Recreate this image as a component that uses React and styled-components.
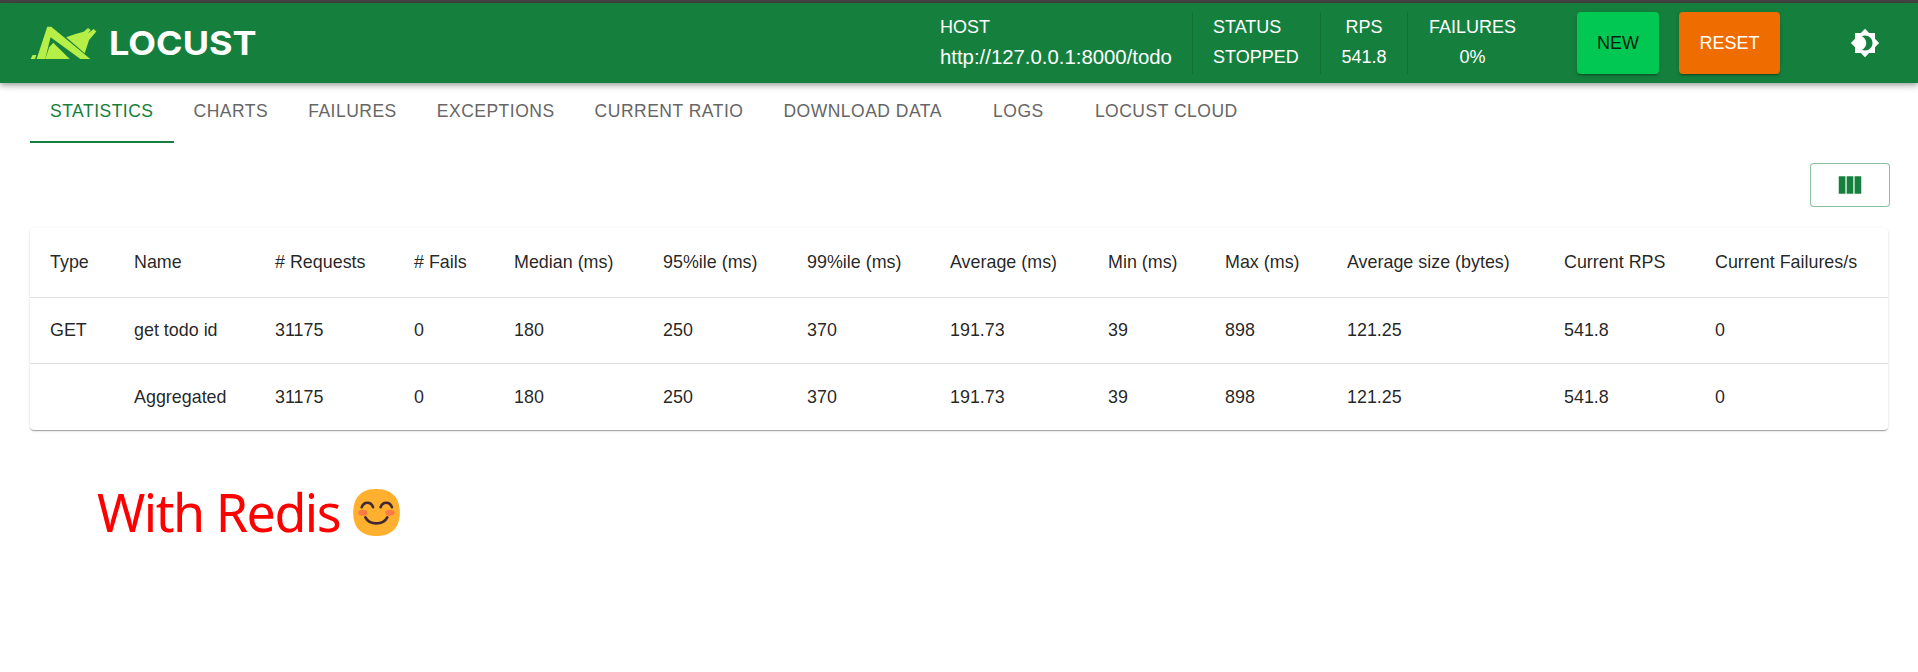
import React from "react";
import styled, { createGlobalStyle } from "styled-components";

const Global = createGlobalStyle`
  html, body { margin: 0; padding: 0; background: #fff; }
  body { font-family: "Liberation Sans", Arial, sans-serif; overflow: hidden; }
`;
const Page = styled.div`
  width: 1918px;
  height: 672px;
  border-top: 3px solid #444;
  box-sizing: border-box;
  background: #fff;
`;
const Header = styled.header`
  height: 80px;
  background: #15803d;
  box-shadow: 0 2px 4px -1px rgba(0,0,0,.2), 0 4px 5px rgba(0,0,0,.14), 0 1px 10px rgba(0,0,0,.12);
  display: flex;
  align-items: center;
  padding: 0 30px;
  color: #fff;
  position: relative;
`;
const Brand = styled.div`
  display: flex;
  align-items: center;
  gap: 12px;
  margin-right: auto;
`;
const Wordmark = styled.span`
  font-family: Inter, sans-serif;
  font-weight: 700;
  font-size: 33px;
  line-height: 1;
  transform: scaleX(1.09);
  transform-origin: left center;
`;
const Stats = styled.div`
  display: flex;
  height: 62px;
  margin-right: 40px;
`;
const Stat = styled.div`
  display: flex;
  flex-direction: column;
  justify-content: space-between;
  align-items: ${p => p.$center ? "center" : "flex-start"};
  width: ${p => p.$w}px;
  padding: 3px 0 5px ${p => p.$center ? 0 : 20}px;
  box-sizing: border-box;
  font-size: 18px;
  line-height: 24px;
  white-space: nowrap;
  & + & { border-left: 1px solid rgba(0,0,0,.12); }
`;
const HostValue = styled.span`
  font-size: 20.35px;
`;
const Actions = styled.div`
  display: flex;
  gap: 20px;
`;
const ActionButton = styled.button`
  height: 62px;
  width: ${p => p.$w}px;
  border: 0;
  border-radius: 4px;
  padding: 0;
  background: ${p => p.$bg};
  color: ${p => p.$fg};
  font: 18px "Liberation Sans", Arial, sans-serif;
  box-shadow: 0 3px 1px -2px rgba(0,0,0,.2), 0 2px 2px rgba(0,0,0,.14), 0 1px 5px rgba(0,0,0,.12);
`;
const ThemeIcon = styled.svg`
  width: 30px;
  height: 30px;
  fill: #fff;
  margin-left: 70px;
  margin-right: 8px;
`;
const TabBar = styled.nav`
  display: flex;
  height: 60px;
  margin: 0 30px;
`;
const Tab = styled.div`
  box-sizing: border-box;
  padding: 0 20px 1px;
  min-width: ${p => p.$min || 0}px;
  height: 60px;
  display: flex;
  align-items: center;
  justify-content: center;
  font-size: 17.5px;
  letter-spacing: .5px;
  color: ${p => p.$active ? "#15803d" : "#666"};
  border-bottom: 2px solid ${p => p.$active ? "#15803d" : "transparent"};
`;
const Toolbar = styled.div`
  display: flex;
  justify-content: flex-end;
  padding: 20px 28px 21px 0;
`;
const ColumnsButton = styled.button`
  width: 80px;
  height: 44px;
  background: #fff;
  border: 1px solid rgba(21,128,61,.5);
  border-radius: 4px;
  display: flex;
  align-items: center;
  justify-content: center;
  padding: 0;
`;
const ColumnsIcon = styled.svg`
  width: 30px;
  height: 30px;
  fill: #15803d;
`;
const Card = styled.div`
  margin: 0 30px;
  border-radius: 4px;
  box-shadow: 0 2px 1px -1px rgba(0,0,0,.2), 0 1px 1px rgba(0,0,0,.14), 0 1px 3px rgba(0,0,0,.12);
  overflow: hidden;
`;
const Table = styled.table`
  width: 100%;
  table-layout: fixed;
  border-collapse: separate;
  border-spacing: 0;
  font-size: 17.9px;
  color: rgba(0,0,0,.87);
`;
const Head = styled.th`
  box-sizing: border-box;
  height: 70px;
  padding: 0 0 1px 20px;
  font-weight: 400;
  text-align: left;
  white-space: nowrap;
  border-bottom: 1px solid #e0e0e0;
`;
const Cell = styled.td`
  box-sizing: border-box;
  height: 66px;
  padding: 0 0 0 20px;
  white-space: nowrap;
  border-bottom: ${p => p.$last ? "0" : "1px solid #e0e0e0"};
`;
const Note = styled.div`
  display: flex;
  align-items: center;
  gap: 13px;
  margin: 50px 0 0 97px;
  font-family: "Noto Sans", sans-serif;
  font-size: 52px;
  letter-spacing: -1.5px;
  line-height: 64px;
  color: #ff0000;
`;

const widths = [84, 141, 139, 100, 149, 144, 143, 158, 117, 122, 217, 151, 193];
const heads = ["Type", "Name", "# Requests", "# Fails", "Median (ms)", "95%ile (ms)", "99%ile (ms)", "Average (ms)", "Min (ms)", "Max (ms)", "Average size (bytes)", "Current RPS", "Current Failures/s"];
const rows = [
  ["GET", "get todo id", "31175", "0", "180", "250", "370", "191.73", "39", "898", "121.25", "541.8", "0"],
  ["", "Aggregated", "31175", "0", "180", "250", "370", "191.73", "39", "898", "121.25", "541.8", "0"],
];
const tabs = [["STATISTICS"], ["CHARTS"], ["FAILURES"], ["EXCEPTIONS"], ["CURRENT RATIO"], ["DOWNLOAD DATA"], ["LOGS", 113], ["LOCUST CLOUD"]];

const Logo = () => (
  <svg width="67" height="34" viewBox="88 78 202 102">
    <g fill="#b6ef47">
      <path d="M90 177L96 165L107 165L103 177Z" />
      <path d="M140 80L152 80L270 177L240 177L150 112L134 177L108 177Z" />
      <path d="M134 177L146 142L158 128L208 177Z" />
      <path d="M197 112L225 102L250 95L263 84L271 90L262 100L280 87L288 94L266 120L253 160Z" />
    </g>
  </svg>
);

const Smile = () => (
  <svg width="47" height="47" viewBox="36 30 141 142">
    <path fill="#ffb02e" d="M106 30C152 30 177 55 177 101C177 147 152 172 106 172C60 172 36 147 36 101C36 55 60 30 106 30Z" />
    <ellipse cx="65" cy="102" rx="14" ry="9" fill="#ff7a45" />
    <ellipse cx="147" cy="102" rx="14" ry="9" fill="#ff7a45" />
    <path d="M62 85C68 67 90 67 96 85M119 85C125 67 147 67 153 85M73 116C85 140 127 140 139 116" fill="none" stroke="#402a32" strokeWidth="8" strokeLinecap="round" />
  </svg>
);

export default function App() {
  return (
    <Page>
      <Global />
      <Header>
        <Brand>
          <Logo />
          <Wordmark>LOCUST</Wordmark>
        </Brand>
        <Stats>
          <Stat $w={272}><span>HOST</span><HostValue>http://127.0.0.1:8000/todo</HostValue></Stat>
          <Stat $w={128}><span>STATUS</span><span>STOPPED</span></Stat>
          <Stat $w={87} $center><span>RPS</span><span>541.8</span></Stat>
          <Stat $w={130} $center><span>FAILURES</span><span>0%</span></Stat>
        </Stats>
        <Actions>
          <ActionButton $w={82} $bg="#00c853" $fg="rgba(0,0,0,.87)">NEW</ActionButton>
          <ActionButton $w={101} $bg="#ef6c00" $fg="#fff">RESET</ActionButton>
        </Actions>
        <ThemeIcon viewBox="0 0 24 24">
          <path d="M20 8.69V4h-4.69L12 .69 8.69 4H4v4.69L.69 12 4 15.31V20h4.69L12 23.31 15.31 20H20v-4.69L23.31 12 20 8.69zM12 18c-.89 0-1.74-.2-2.5-.55C11.56 16.5 13 14.42 13 12s-1.44-4.5-3.5-5.45C10.26 6.2 11.11 6 12 6c3.31 0 6 2.69 6 6s-2.69 6-6 6z" />
        </ThemeIcon>
      </Header>
      <TabBar>
        {tabs.map(([t, min], i) => <Tab key={t} $active={i === 0} $min={min}>{t}</Tab>)}
      </TabBar>
      <Toolbar>
        <ColumnsButton>
          <ColumnsIcon viewBox="0 0 24 24"><path d="M14.67 5v14H9.33V5zm1 14H21V5h-5.33zm-7.34 0V5H3v14z" /></ColumnsIcon>
        </ColumnsButton>
      </Toolbar>
      <Card>
        <Table>
          <colgroup>{widths.map((w, i) => <col key={i} width={w} />)}</colgroup>
          <thead><tr>{heads.map(h => <Head key={h}>{h}</Head>)}</tr></thead>
          <tbody>
            {rows.map((r, i) => (
              <tr key={i}>{r.map((c, j) => <Cell key={j} $last={i === rows.length - 1}>{c}</Cell>)}</tr>
            ))}
          </tbody>
        </Table>
      </Card>
      <Note>With Redis<Smile /></Note>
    </Page>
  );
}
